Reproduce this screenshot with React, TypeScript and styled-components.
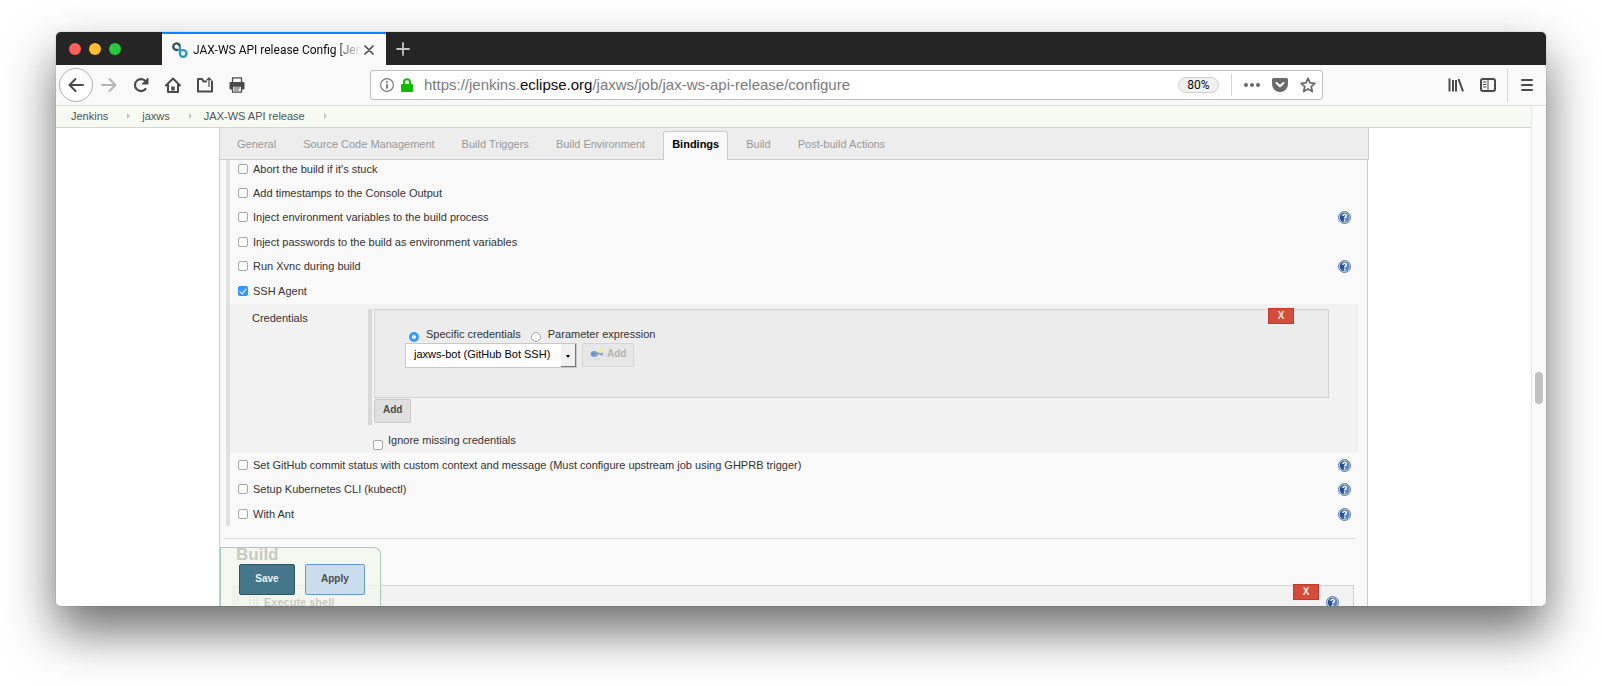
import React from "react";
import styled, { createGlobalStyle, css } from "styled-components";

const GlobalStyle = createGlobalStyle`
  *, *::before, *::after { box-sizing: border-box; }
  body {
    margin: 0;
    background: #fff;
    color: #333;
    font: 11px/16px "Liberation Sans", Arial, sans-serif;
  }
  button, input, select { font: inherit; margin: 0; }
  a { color: inherit; text-decoration: none; }
`;

const Desktop = styled.div`
  display: flex;
  height: 100vh;
  padding: 32px 56px 80px;
  overflow: hidden;
`;

const BrowserWindow = styled.div`
  flex: 1;
  min-width: 0;
  display: flex;
  flex-direction: column;
  overflow: hidden;
  border-radius: 5px;
  background: #f9f9fa;
  box-shadow: 0 0 1px rgba(0, 0, 0, 0.6), 0 25px 50px rgba(0, 0, 0, 0.58);
`;

/* ---------- browser chrome ---------- */

const TitleBar = styled.div`
  flex: none;
  display: flex;
  height: 33px;
  background: #252525;
`;

const Lights = styled.div`
  display: flex;
  align-items: center;
  gap: 8px;
  width: 106px;
  padding-left: 13px;
`;

const Light = styled.button<{ $color: string }>`
  width: 12px;
  height: 12px;
  padding: 0;
  border: 0;
  border-radius: 50%;
  background: ${(p) => p.$color};
`;

const BrowserTab = styled.div`
  display: flex;
  align-items: center;
  width: 224px;
  padding: 0 10px;
  border-top: 2px solid #0a84ff;
  background: #f9f9fa;
  color: #0c0c0d;
  font: 12px/16px Roboto, sans-serif;
`;

const TabTitle = styled.span`
  flex: 1;
  min-width: 0;
  margin-left: 5px;
  overflow: hidden;
  white-space: nowrap;
  mask-image: linear-gradient(to right, #000 84%, transparent);
`;

const IconButton = styled.button<{ $width?: number }>`
  flex: none;
  display: flex;
  align-items: center;
  justify-content: center;
  width: ${(p) => p.$width ?? 32}px;
  height: 34px;
  padding: 0;
  border: 0;
  background: none;
  color: #4a4a4b;

  &:disabled { color: #b4b4b5; }
`;

const TabButton = styled(IconButton)`
  height: 30px;
`;

const NewTab = styled(IconButton)`
  height: 33px;
  color: #c4c4c4;
`;

const Toolbar = styled.div`
  flex: none;
  display: flex;
  align-items: center;
  height: 41px;
  padding: 0 3px;
  border-bottom: 1px solid #dcdcdc;
`;

const BackButton = styled(IconButton)`
  border: 1px solid #b0b0b0;
  border-radius: 50%;
  background: #fff;
`;

const AddressBar = styled.div`
  flex: 1;
  min-width: 0;
  display: flex;
  align-items: center;
  height: 30px;
  margin: 0 117px;
  padding-left: 9px;
  border: 1px solid #bfbfbf;
  border-radius: 3px;
  background: #fff;
  color: #7a7a7a;
`;

const Url = styled.div`
  flex: 1;
  min-width: 0;
  margin-left: 4px;
  overflow: hidden;
  white-space: nowrap;
  font-size: 15px;
  line-height: 20px;

  b { color: #0c0c0d; font-weight: 400; }
`;

const Zoom = styled.button`
  width: 41px;
  height: 16px;
  margin-right: 12px;
  padding: 0;
  border: 1px solid #cfcfcf;
  border-radius: 8px;
  background: #f0f0f0;
  color: #0c0c0d;
  font: 12px/14px Roboto, sans-serif;
`;

const Divider = styled.span<{ $height: number; $before?: number; $after: number }>`
  width: 1px;
  height: ${(p) => p.$height}px;
  margin: 0 ${(p) => p.$after}px 0 ${(p) => p.$before ?? 0}px;
  background: #d4d4d4;
`;

/* ---------- page ---------- */

const Viewport = styled.div`
  flex: 1;
  min-height: 0;
  display: flex;
`;

const Page = styled.div`
  position: relative;
  flex: 1;
  min-width: 0;
  overflow: hidden;
  background: #fff;
`;

const ScrollTrack = styled.div`
  flex: none;
  width: 15px;
  padding: 266px 3px 0;
  border-left: 1px solid #e6e6e6;
  background: #fafafa;
`;

const ScrollThumb = styled.div`
  width: 8px;
  height: 32px;
  border-radius: 4px;
  background: #c1c1c1;
`;

const Breadcrumbs = styled.nav`
  display: flex;
  align-items: center;
  gap: 12px;
  height: 22px;
  padding: 0 0 2px 15px;
  border-bottom: 1px solid #d3d7cf;
  background: #f6faf2;
  color: #4d545d;
`;

const Chevron = styled.span`
  width: 3px;
  margin-left: 7px;
  border: 3px solid transparent;
  border-left-color: #c4c4c4;
  border-right: 0;
`;

const Config = styled.main`
  margin: 0 163px;
`;

const TabBar = styled.nav`
  display: flex;
  align-items: flex-end;
  gap: 1px;
  height: 32px;
  margin-right: -1px;
  padding-left: 4px;
  border: solid #ccc;
  border-width: 0 1px 1px;
  background: #ededed;
  color: #999;
`;

const Tab = styled.a<{ $active?: boolean }>`
  height: 29px;
  margin: 0 4px -1px;
  padding: 4px 8px;
  border: 1px solid transparent;
  border-bottom: 0;
  line-height: 16px;
  white-space: nowrap;

  ${(p) =>
    p.$active &&
    css`
      position: relative;
      border-color: #ccc;
      border-radius: 3px 3px 0 0;
      background: #f9f9f9;
      color: #000;
      font-weight: 700;
    `}
`;

const Panel = styled.form`
  overflow: hidden;
  padding: 0 8px 0 6px;
  border: solid #ccc;
  border-width: 0 1px;
  background: #f9f9f9;
`;

const OptionList = styled.div`
  margin-top: -3px;
  border-left: 4px solid #e0e0e0;
`;

const OptionRow = styled.div<{ $tall?: boolean }>`
  display: flex;
  align-items: center;
  justify-content: space-between;
  height: ${(p) => (p.$tall ? 25 : 24)}px;
  padding: 0 8px ${(p) => (p.$tall ? 1 : 0)}px;
`;

const Choice = styled.label<{ $gap?: number }>`
  display: flex;
  align-items: center;
  gap: ${(p) => p.$gap ?? 5}px;
  white-space: nowrap;
`;

const LowChoice = styled(Choice)<{ $drop?: number }>`
  align-items: flex-start;
  input { margin-top: ${(p) => p.$drop ?? 6}px; }
`;

const Checkbox = styled.input.attrs({ type: "checkbox" })`
  appearance: none;
  flex: none;
  width: 10px;
  height: 10px;
  border: 1px solid #a6a6a6;
  border-radius: 2px;
  background: #fff;

  &:checked {
    border-color: #2f8ff7;
    background: #3b99fc;
  }

  &:checked::after {
    content: "";
    display: block;
    width: 4px;
    height: 7px;
    margin-left: 2px;
    border: solid #fff;
    border-width: 0 1px 1px 0;
    rotate: 40deg;
  }
`;

const Radio = styled.input.attrs({ type: "radio" })`
  appearance: none;
  flex: none;
  width: 10px;
  height: 10px;
  border: 1px solid #a6a6a6;
  border-radius: 50%;
  background: #fff;

  &:checked { border: 3px solid #3b99fc; }
`;

const HelpLink = styled.a`
  display: flex;
`;

const Nested = styled.div`
  display: flex;
  height: 149px;
  padding: 5px 30px 0 22px;
  background: #f2f2f2;
`;

const NestedLabel = styled.div`
  flex: none;
  width: 116px;
  padding-top: 1px;
`;

const NestedBody = styled.div`
  flex: 1;
  min-width: 0;
`;

const Repeatable = styled.div`
  height: 116px;
  padding-left: 2px;
  border-left: 4px solid #d9d9d9;
`;

const CredentialBox = styled.fieldset`
  position: relative;
  height: 89px;
  min-width: 0;
  margin: 0 0 1px;
  padding: 16px 30px 0;
  border: 1px solid #d3d3d3;
  background: #ececec;
`;

const RadioRow = styled.div`
  display: flex;
  gap: 10px;
  padding-left: 4px;
`;

const SelectRow = styled.div`
  display: flex;
  align-items: flex-start;
  gap: 5px;
  margin-top: 1px;
`;

const SelectFrame = styled.div`
  position: relative;
  width: 172px;
  height: 25px;
  border: 1px solid #c8c8c8;

  &::after {
    content: "";
    position: absolute;
    top: 11px;
    right: 6px;
    border: 2px solid transparent;
    border-top: 3px solid #000;
    border-bottom: 0;
    pointer-events: none;
  }

  &::before {
    content: "";
    position: absolute;
    top: 0;
    right: 0;
    width: 15px;
    height: 23px;
    border: solid #777;
    border-width: 0 1px 1px 0;
    background: #f0f0f0;
    pointer-events: none;
  }
`;

const Select = styled.select`
  appearance: none;
  display: block;
  width: 100%;
  height: 23px;
  padding: 0 18px 4px 8px;
  border: 0;
  border-radius: 0;
  background: #fff;
  color: #000;
`;

const Button = styled.button<{ $kind?: "save" | "apply" }>`
  display: inline-flex;
  align-items: center;
  justify-content: center;
  gap: 3px;
  height: 24px;
  padding: 0 8px 2px;
  border: 1px solid #c8c8c8;
  border-radius: 2px;
  background: #e0e0e0;
  color: #4d4d4d;
  font-size: 10px;
  font-weight: 700;

  &:disabled {
    padding: 0 7px 2px;
    border-color: #d6d6d6;
    background: #e7e7e7;
    color: #b3b3b3;
  }

  ${(p) =>
    p.$kind &&
    css`
      min-width: 56px;
      height: 31px;
      padding: 0 15px 2px;
    `}
  ${(p) =>
    p.$kind === "save" &&
    css`
      border-color: #2b5366;
      background: #45778a;
      color: #edf2f4;
    `}
  ${(p) =>
    p.$kind === "apply" &&
    css`
      border-color: #6297d2;
      background: #cbdced;
    `}
`;

const DeleteButton = styled.button<{ $right: number }>`
  position: absolute;
  top: -2px;
  right: ${(p) => p.$right}px;
  width: 26px;
  height: 16px;
  padding: 0;
  border: 1px solid #c23a2b;
  background: #d54c3b;
  color: #fbe9e6;
  font-size: 10px;
  font-weight: 700;
  line-height: 14px;
`;

const IgnoreRow = styled.div`
  padding: 7px 0 0 5px;
`;

const Rule = styled.hr`
  height: 1px;
  margin: 12px 4px 6px -2px;
  border: 0;
  background: #d9d9d9;
`;

const SectionTitle = styled.h2`
  margin: 0 0 20px 10px;
  font-size: 17px;
  line-height: 20px;
`;

const Builder = styled.div`
  margin: 0 5px 0 6px;
  padding-left: 1px;
  border-left: 4px solid #e0e0e0;
`;

const BuilderBox = styled.section`
  position: relative;
  display: flex;
  align-items: flex-start;
  height: 120px;
  padding: 10px 14px 0 11px;
  border: 1px solid #d3d3d3;
  background: #f2f2f2;
`;

const BuilderTitle = styled.h3`
  flex: 1;
  margin: 0 0 0 6px;
  font-size: 11px;
  line-height: 13px;
`;

const StickyActions = styled.div`
  position: absolute;
  left: 164px;
  bottom: 0;
  display: flex;
  gap: 10px;
  padding: 16px 15px 11px 18px;
  border: 1px solid #a9cbb9;
  border-bottom: 0;
  border-top-right-radius: 7px;
  background: rgba(242, 247, 237, 0.77);
`;

/* ---------- icons ---------- */

const Svg = ({ w = 16, h = 16, children }: { w?: number; h?: number; children: React.ReactNode }) => (
  <svg
    width={w}
    height={h}
    viewBox={`0 0 ${w} ${h}`}
    fill="none"
    stroke="currentColor"
    strokeWidth="2"
    strokeLinecap="round"
    strokeLinejoin="round"
    aria-hidden="true"
  >
    {children}
  </svg>
);

const HelpIcon = () => (
  <HelpLink href="#help" aria-label="Help">
    <svg width="13" height="13" viewBox="0 0 13 13" aria-hidden="true">
      <circle cx="6.5" cy="6.5" r="6" fill="#dfe7f3" stroke="#5577ab" strokeWidth="1" />
      <circle cx="6.5" cy="6.5" r="4.8" fill="#2a5496" />
      <path d="M6.5 1.7a4.8 4.8 0 0 1 0 9.6z" fill="#5c86c2" />
      <path d="M4.8 5c0-2.2 3.6-2.1 3.5-.1C8.3 6.2 6.600 6.1 6.6 7.500" fill="none" stroke="#fff" strokeWidth="1.4" />
      <circle cx="6.6" cy="9.5" r=".9" fill="#fff" />
    </svg>
  </HelpLink>
);

const KeyIcon = () => (
  <svg width="14" height="12" viewBox="0 0 14 12" aria-hidden="true">
    <path d="M3 11h7" stroke="#d4d4d4" />
    <path d="M5 4.500h8v3h-2.500v-.8H6z" fill="#86a9d8" />
    <ellipse cx="4.200" cy="6" rx="3.700" ry="3" fill="#7c9fcf" />
    <circle cx="3" cy="5.700" r=".9" fill="#4c79b5" />
    <circle cx="10.800" cy="2.800" r="2.200" fill="#f4ef86" />
  </svg>
);

const Favicon = () => (
  <svg width="16" height="16" viewBox="0 0 16 16" fill="none" strokeWidth="2.300" aria-hidden="true">
    <path d="M6.500 7.400A3.300 3.300 0 1 1 7.900 4.500" stroke="#33505f" />
    <path d="M7.900 4v7.500a3.300 3.300 0 1 0 3.300-3.300c-1.600 0-2.400 1-4.700-.8" stroke="#2b9ab8" />
  </svg>
);

/* ---------- content ---------- */

type Option = { label: string; tall?: boolean; help?: boolean; checked?: boolean };

const optionsBefore: Option[] = [
  { label: "Abort the build if it's stuck" },
  { label: "Add timestamps to the Console Output" },
  { label: "Inject environment variables to the build process", tall: true, help: true },
  { label: "Inject passwords to the build as environment variables" },
  { label: "Run Xvnc during build", tall: true, help: true },
  { label: "SSH Agent", tall: true, checked: true },
];

const optionsAfter: Option[] = [
  { label: "Set GitHub commit status with custom context and message (Must configure upstream job using GHPRB trigger)", help: true },
  { label: "Setup Kubernetes CLI (kubectl)", tall: true, help: true },
  { label: "With Ant", help: true },
];

const tabs = ["General", "Source Code Management", "Build Triggers", "Build Environment", "Bindings", "Build", "Post-build Actions"];

const Options = ({ items }: { items: Option[] }) => (
  <>
    {items.map((o) => (
      <OptionRow key={o.label} $tall={o.tall}>
        <Choice>
          <Checkbox defaultChecked={o.checked} />
          {o.label}
        </Choice>
        {o.help && <HelpIcon />}
      </OptionRow>
    ))}
  </>
);

const Chrome = () => (
  <>
    <TitleBar>
      <Lights>
        <Light $color="#ff5f57" aria-label="Close window" />
        <Light $color="#ffbd2e" aria-label="Minimize" />
        <Light $color="#28c940" aria-label="Zoom" />
      </Lights>
      <BrowserTab>
        <Favicon />
        <TabTitle>JAX-WS API release Config [Jen</TabTitle>
        <TabButton $width={14} aria-label="Close tab">
          <Svg w={10} h={10}><path d="M1 1l8 8M9 1l-8 8" strokeWidth="1.7" /></Svg>
        </TabButton>
      </BrowserTab>
      <NewTab $width={34} aria-label="New tab">
        <Svg w={14} h={14}><path d="M7 1v12M1 7h12" strokeWidth="1.8" /></Svg>
      </NewTab>
    </TitleBar>
    <Toolbar>
      <BackButton $width={34} aria-label="Back">
        <Svg><path d="M15 8H2M7.500 2L1.500 8l6 6" /></Svg>
      </BackButton>
      <IconButton disabled aria-label="Forward">
        <Svg><path d="M1 8h13M8.500 2l6 6-6 6" /></Svg>
      </IconButton>
      <IconButton aria-label="Reload">
        <Svg>
          <path d="M12.500 12A6 6 0 1 1 12.800 4.500" strokeWidth="2.200" />
          <path d="M15 1.500v5.500H9.500z" fill="currentColor" strokeWidth="1" />
        </Svg>
      </IconButton>
      <IconButton aria-label="Home">
        <Svg>
          <path d="M1 8.500L8 1.500l7 7M3 8v7h10V8" />
          <path d="M8 9.500v4" strokeWidth="3.500" strokeLinecap="butt" />
        </Svg>
      </IconButton>
      <IconButton aria-label="Open file">
        <Svg w={18}>
          <path d="M10 4.500H7.500L6 2H2v12.500h14V4.500" />
          <path d="M13 9.500V1M10.800 3.200L13 1l2.200 2.200" strokeWidth="1.200" />
        </Svg>
      </IconButton>
      <IconButton aria-label="Print">
        <Svg>
          <path d="M1.500 6h13v5.500h-13z" fill="currentColor" />
          <path d="M3.500 5V.8h9V5M3.500 9h9v6.200h-9z" fill="#f9f9fa" strokeWidth="1.300" />
          <path d="M5.500 11h5M5.500 13h4" strokeWidth="1" />
        </Svg>
      </IconButton>
      <AddressBar>
        <Svg w={14} h={14}>
          <circle cx="7" cy="7" r="6.400" strokeWidth="1.200" />
          <path d="M7 6.200v4.300" strokeLinecap="butt" />
          <circle cx="7" cy="4" r="1.100" fill="currentColor" stroke="none" />
        </Svg>
        <svg width="26" height="14" viewBox="-7 0 26 14" aria-hidden="true">
          <path d="M3 7V4.200a3 3 0 0 1 6 0V7" fill="none" stroke="#12bc00" strokeWidth="2" />
          <rect x="0" y="6" width="12" height="8" rx="1" fill="#12bc00" />
        </svg>
        <Url>https://jenkins.<b>eclipse.org</b>/jaxws/job/jax-ws-api-release/configure</Url>
        <Zoom>80%</Zoom>
        <Divider $height={22} $after={6} />
        <IconButton $width={28} aria-label="Page actions">
          <Svg><g fill="#6a6a6b" stroke="none"><circle cx="2" cy="8" r="2" /><circle cx="8" cy="8" r="2" /><circle cx="14" cy="8" r="2" /></g></Svg>
        </IconButton>
        <IconButton $width={28} aria-label="Save to Pocket">
          <Svg>
            <path d="M1.500 1h13A1.500 1.500 0 0 1 16 2.500V7a8 8 0 0 1-16 0V2.500A1.500 1.500 0 0 1 1.500 1z" fill="#6a6a6b" stroke="none" />
            <path d="M4.500 6L8 9.300 11.500 6" stroke="#fff" />
          </Svg>
        </IconButton>
        <IconButton $width={28} aria-label="Bookmark">
          <Svg><path d="M8 1.300l2 4.500 4.900.5-3.700 3.300 1.100 4.900L8 12l-4.300 2.500 1.100-4.900L1.100 6.300 6 5.800z" stroke="#6a6a6b" strokeWidth="1.800" /></Svg>
        </IconButton>
      </AddressBar>
      <IconButton aria-label="Library">
        <Svg><path d="M1.500 1.500v13M5 3v11.500M8 3v11.500M10.500 2l4.500 12.300" strokeWidth="2" strokeLinecap="butt" /></Svg>
      </IconButton>
      <IconButton aria-label="Sidebars">
        <Svg>
          <rect x="1" y="2" width="14" height="12" rx="2" />
          <path d="M8 2v12M3.500 5h2.500M3.500 7.500h2.500M3.500 10h2.500" strokeWidth="1" />
        </Svg>
      </IconButton>
      <Divider $height={34} $before={3} $after={3} />
      <IconButton aria-label="Open menu">
        <Svg w={12} h={14}><path d="M1 2h10M1 7h10M1 12h10" /></Svg>
      </IconButton>
    </Toolbar>
  </>
);

export default function App() {
  return (
    <Desktop>
      <GlobalStyle />
      <BrowserWindow>
        <Chrome />
        <Viewport>
          <Page>
            <Breadcrumbs aria-label="Breadcrumb">
              {["Jenkins", "jaxws", "JAX-WS API release"].map((name) => (
                <React.Fragment key={name}>
                  <a href="#crumb">{name}</a>
                  <Chevron />
                </React.Fragment>
              ))}
            </Breadcrumbs>
            <Config>
              <TabBar>
                {tabs.map((t) => (
                  <Tab key={t} href="#section" $active={t === "Bindings"}>{t}</Tab>
                ))}
              </TabBar>
              <Panel>
                <OptionList>
                  <Options items={optionsBefore} />
                  <Nested>
                    <NestedLabel>Credentials</NestedLabel>
                    <NestedBody>
                      <Repeatable>
                        <CredentialBox aria-label="Credentials">
                          <DeleteButton type="button" $right={34}>X</DeleteButton>
                          <RadioRow>
                            <LowChoice $gap={7}><Radio name="credentials" defaultChecked />Specific credentials</LowChoice>
                            <LowChoice $gap={7}><Radio name="credentials" />Parameter expression</LowChoice>
                          </RadioRow>
                          <SelectRow>
                            <SelectFrame>
                              <Select aria-label="Credential">
                                <option>jaxws-bot (GitHub Bot SSH)</option>
                              </Select>
                            </SelectFrame>
                            <Button type="button" disabled><KeyIcon />Add</Button>
                          </SelectRow>
                        </CredentialBox>
                        <Button type="button">Add</Button>
                      </Repeatable>
                      <IgnoreRow>
                        <LowChoice $drop={8}><Checkbox />Ignore missing credentials</LowChoice>
                      </IgnoreRow>
                    </NestedBody>
                  </Nested>
                  <Options items={optionsAfter} />
                </OptionList>
                <Rule />
                <SectionTitle>Build</SectionTitle>
                <Builder>
                  <BuilderBox>
                    <DeleteButton type="button" $right={34}>X</DeleteButton>
                    <svg width="9" height="16" viewBox="0 0 9 16" fill="#bbb" aria-hidden="true">
                      {[0, 3, 6, 9, 12].map((y) =>
                        [0, 4, 7].map((x) => <rect key={`${x}-${y}`} x={x} y={y} width="2" height="2" />)
                      )}
                    </svg>
                    <BuilderTitle>Execute shell</BuilderTitle>
                    <HelpIcon />
                  </BuilderBox>
                </Builder>
              </Panel>
            </Config>
            <StickyActions>
              <Button type="submit" $kind="save">Save</Button>
              <Button type="button" $kind="apply">Apply</Button>
            </StickyActions>
          </Page>
          <ScrollTrack>
            <ScrollThumb />
          </ScrollTrack>
        </Viewport>
      </BrowserWindow>
    </Desktop>
  );
}
